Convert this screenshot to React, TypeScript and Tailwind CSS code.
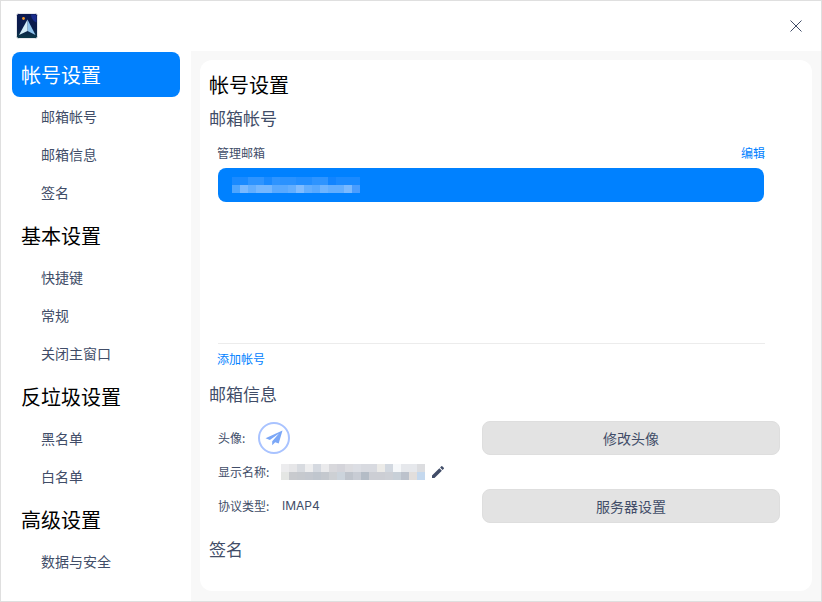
import React from "react";

const navGroups = [
  { title: "帐号设置", active: true, items: ["邮箱帐号", "邮箱信息", "签名"] },
  { title: "基本设置", items: ["快捷键", "常规", "关闭主窗口"] },
  { title: "反垃圾设置", items: ["黑名单", "白名单"] },
  { title: "高级设置", items: ["数据与安全"] },
];

// pixelated (blurred out) address text
const emailMosaic = [
  ["#1a8aff", "#1a8aff", "#2e94ff", "#2e94ff", "#1a8aff", "#2e94ff", "#2a92ff", "#2a92ff", "#228eff", "#228eff", "#2e94ff", "#2e94ff", "#1184ff", "#1a8aff", "#1a8aff", "#1a8aff"],
  ["#4da5ff", "#7ab9ff", "#62aeff", "#74b7ff", "#74b7ff", "#58a9ff", "#58a9ff", "#62aeff", "#80bcff", "#62aeff", "#58a9ff", "#6eb4ff", "#62aeff", "#62aeff", "#7ab9ff", "#4a9dff"],
];

const nameMosaic = [
  ["#ececee", "#e6e6e8", "#d8dbe0", "#eeeeef", "#d5d9e0", "#eaeaec", "#d8d8dc", "#d4d4da", "#dcdce0", "#dcdee4", "#d8dae0", "#d8dae0", "#ecebe8", "#d2d8e0", "#f6f8fa", "#e6e8ec", "#e6e8ec", "#dcdde0"],
  ["#e4e6e4", "#c8cace", "#c6c9ce", "#c4c8cf", "#c0c6ce", "#c4c8ce", "#cdd0d4", "#ccd4dc", "#bfc4cc", "#c8ccd4", "#b4bcc6", "#ccced4", "#ccced4", "#cdd0d6", "#c8d0d8", "#bcc2cc", "#e2dedc", "#c4d8ee"],
];

const Mosaic = ({ rows }: { rows: string[][] }) => (
  <div className="flex flex-col">
    {rows.map((row, i) => (
      <div key={i} className="flex">
        {row.map((color, j) => (
          <div key={j} className="w-2 h-2" style={{ backgroundColor: color }} />
        ))}
      </div>
    ))}
  </div>
);

const AppLogo = () => (
  <svg width="22" height="26" viewBox="0 0 22 26">
    <defs>
      <linearGradient id="sky" x1="0" y1="0" x2="0" y2="1">
        <stop offset="0" stopColor="#0c1a52" />
        <stop offset="0.6" stopColor="#0a1c4a" />
        <stop offset="1" stopColor="#0c3a48" />
      </linearGradient>
    </defs>
    <rect x="0.5" y="0.5" width="21" height="25" rx="2" fill="url(#sky)" stroke="#e8e8ec" />
    <path d="M15 1.500a9 9 0 0 0 5.500 8V3a1.500 1.500 0 0 0-1.500-1.500z" fill="#1a2c8c" />
    <circle cx="7.500" cy="5.500" r="1.400" fill="#f59a2c" />
    <path d="M11.500 6.500L19.500 22l-8-4z" fill="#8fc2ec" />
    <path d="M11.500 6.500L3 22l8.500-4z" fill="#d4ecf8" />
  </svg>
);

const PlaneAvatar = () => (
  <div className="w-8 h-8 rounded-full border-2 border-[#a9c3ff] flex items-center justify-center bg-white">
    <svg width="18" height="16" viewBox="0 0 18 16">
      <path d="M17.500 0.500L0.500 8.300l4.400 1.700L14 3.500 7.200 11.200v4l3-3 3.500 1.400z" fill="#7ba7f7" />
    </svg>
  </div>
);

const GrayButton = ({ label }: { label: string }) => (
  <button className="w-[298px] h-[34px] rounded-lg bg-[#e3e3e3] border border-[#dedede] text-sm text-[#414d68]">
    {label}
  </button>
);

const App = () => {
  return (
    <div
      className="w-[822px] h-[602px] bg-white border border-[#dfdfdf] flex flex-col overflow-hidden"
      style={{ fontFamily: '"Noto Sans CJK SC", "Noto Sans", sans-serif' }}
    >
      {/* title bar */}
      <div className="h-[50px] shrink-0 flex items-center justify-between pl-[15px] pr-[19px]">
        <AppLogo />
        <svg width="12" height="12" viewBox="0 0 12 12" className="text-[#414d68]">
          <path d="M0.500 0.500l11 11M11.500 0.500l-11 11" stroke="currentColor" strokeWidth="1" fill="none" />
        </svg>
      </div>

      <div className="flex flex-1 min-h-0">
        {/* sidebar */}
        <nav className="w-[190px] shrink-0 pl-[11px] pr-[11px]">
          {navGroups.map((group) => (
            <div key={group.title}>
              <div
                className={
                  group.active
                    ? "h-[45px] my-px flex items-center pl-[9px] rounded-lg bg-[#0081ff] text-white text-[20px]"
                    : "h-[45px] my-px flex items-center pl-[9px] rounded-lg text-black text-[20px]"
                }
              >
                {group.title}
              </div>
              {group.items.map((item) => (
                <div key={item} className="h-[38px] pb-[2px] flex items-center pl-[29px] text-sm text-[#414d68]">
                  {item}
                </div>
              ))}
            </div>
          ))}
        </nav>

        {/* content */}
        <main className="flex-1 min-w-0 bg-[#f8f8f8] p-[9px]">
          <div className="h-[531px] bg-white rounded-xl pl-[9px] pr-[32px] flex flex-col">
            <div className="h-[28px] mt-[11px] flex items-center text-[20px] text-black">帐号设置</div>
            <div className="h-[24px] mt-[7px] flex items-center text-[17px] text-[#414d68]">邮箱帐号</div>

            <div className="h-[20px] mt-[13px] pl-[8px] mr-[15px] flex items-center justify-between text-xs">
              <span className="text-[#414d68]">管理邮箱</span>
              <span className="text-[#0081ff]">编辑</span>
            </div>
            <div className="ml-[9px] mr-[16px] mt-[5px] h-[34px] rounded-lg bg-[#0081ff] pl-[14px] flex items-center">
              <Mosaic rows={emailMosaic} />
            </div>

            <div className="ml-[9px] mr-[15px] mt-[141px] h-px bg-[#ececec]" />
            <div className="ml-[8px] h-[30px] flex items-center text-xs text-[#0081ff]">添加帐号</div>

            <div className="h-[24px] mt-[8px] flex items-center text-[17px] text-[#414d68]">邮箱信息</div>

            <div className="flex mt-[15px]">
              <div className="w-[273px] pl-[9px] text-xs text-[#414d68] flex flex-col">
                <div className="h-[34px] flex items-center">
                  <span className="w-[40px]">头像:</span>
                  <PlaneAvatar />
                </div>
                <div className="h-[34px] flex items-center">
                  <span className="w-[63px]">显示名称:</span>
                  <Mosaic rows={nameMosaic} />
                  <svg width="16" height="16" viewBox="0 0 24 24" className="ml-[5px] text-[#414d68]">
                    <path
                      fill="currentColor"
                      d="M3 17.250V21h3.750L17.810 9.940l-3.750-3.750L3 17.250zM20.710 7.040a1 1 0 0 0 0-1.410l-2.340-2.340a1 1 0 0 0-1.410 0l-1.830 1.830 3.750 3.750 1.830-1.830z"
                    />
                  </svg>
                </div>
                <div className="h-[34px] flex items-center">
                  <span className="w-[64px]">协议类型:</span>
                  <span style={{ fontFamily: '"Inter", sans-serif' }}>IMAP4</span>
                </div>
              </div>
              <div className="flex flex-col gap-[34px]">
                <GrayButton label="修改头像" />
                <GrayButton label="服务器设置" />
              </div>
            </div>

            <div className="h-[24px] mt-[14px] flex items-center text-[17px] text-[#414d68]">签名</div>
          </div>
        </main>
      </div>
    </div>
  );
};

export default App;
